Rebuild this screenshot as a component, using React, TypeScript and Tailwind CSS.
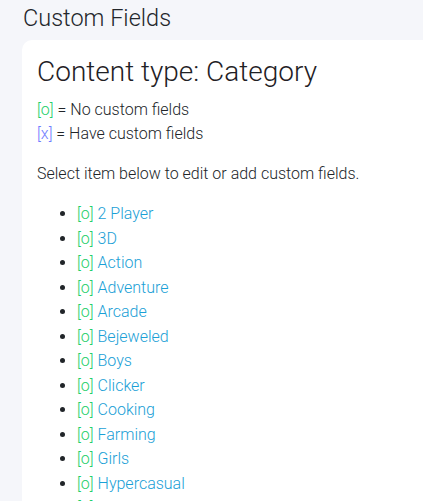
const items = [
  '2 Player',
  '3D',
  'Action',
  'Adventure',
  'Arcade',
  'Bejeweled',
  'Boys',
  'Clicker',
  'Cooking',
  'Farming',
  'Girls',
  'Hypercasual',
  'Io',
];

export default function App() {
  return (
    <div className="min-h-screen bg-[#f5f6fa] font-['Roboto',sans-serif] text-[#212529]">
      <h1 className="pl-[23px] pt-[3px] text-[23.5px] font-light leading-[30px] text-[#23262b]">Custom Fields</h1>
      <div className="ml-[22px] mt-[7px] rounded-l-[10px] bg-white pl-[15px] pt-[15px] pb-6">
        <h2 className="text-[28px] font-light leading-[34px] text-[#1f2125]">Content type: Category</h2>
        <div className="mt-[9px] text-[16px] font-light leading-6">
          <p>
            <span className="text-[#1fcf6a]">[o]</span> = No custom fields
          </p>
          <p>
            <span className="text-[#6f7dff]">[x]</span> = Have custom fields
          </p>
          <p className="mt-4">Select item below to edit or add custom fields.</p>
        </div>
        <ul className="mt-4 list-disc pl-10 text-[16px] font-light leading-[24.5px] marker:text-[#212529]">
          {items.map((name) => (
            <li key={name}>
              <a href="#" className="text-[#1aa0d6]">
                <span className="text-[#1fcf6a]">[o]</span> {name}
              </a>
            </li>
          ))}
        </ul>
      </div>
    </div>
  );
}
